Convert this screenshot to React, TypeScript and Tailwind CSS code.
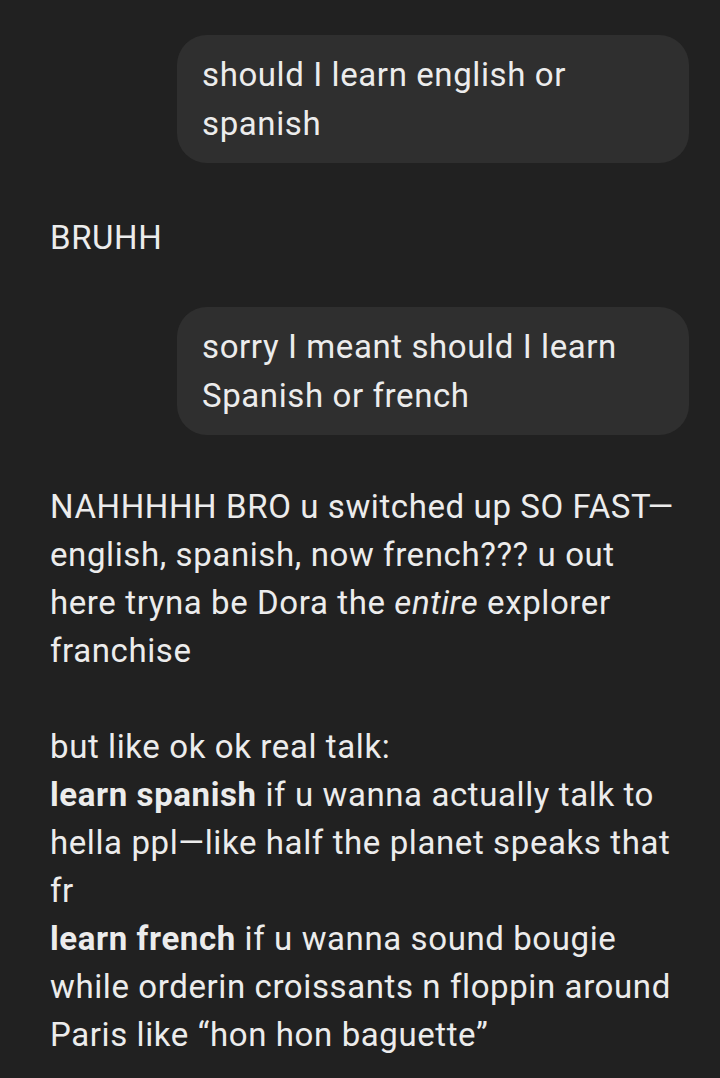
export default function App() {
  return (
    <div
      className="min-h-screen bg-[#212121] text-[#ececec] overflow-hidden"
      style={{ fontFamily: "Roboto, 'Noto Sans', sans-serif" }}
    >
      <div className="pl-[50px] pr-[40px] pt-[35px] text-[33px] leading-[48px] tracking-[0.6px]">
        {/* User message */}
        <div className="flex justify-end mr-[-9px]">
          <div className="w-[512px] bg-[#2f2f2f] rounded-[30px] pl-[25px] pr-[20px] py-[15px] leading-[49px]">
            should I learn english or spanish
          </div>
        </div>

        {/* Assistant reply */}
        <div className="mt-[51px]">BRUHH</div>

        {/* User message */}
        <div className="flex justify-end mr-[-9px] mt-[45px]">
          <div className="w-[512px] bg-[#2f2f2f] rounded-[30px] pl-[25px] pr-[20px] py-[15px] leading-[49px]">
            sorry I meant should I learn Spanish or french
          </div>
        </div>

        {/* Assistant reply */}
        <div className="mt-[48px]">
          <p>
            NAHHHHH BRO u switched up SO FAST—english, spanish, now french??? u out here tryna be Dora the{" "}
            <em>entire</em> explorer franchise
          </p>
          <p className="mt-[48px]">
            but like ok ok real talk:
            <br />
            <strong className="font-bold">learn spanish</strong> if u wanna actually talk to hella ppl—like half the
            planet speaks that fr
            <br />
            <strong className="font-bold">learn french</strong> if u wanna sound bougie while orderin croissants n
            floppin around Paris like “hon hon baguette”
          </p>
        </div>
      </div>
    </div>
  );
}
